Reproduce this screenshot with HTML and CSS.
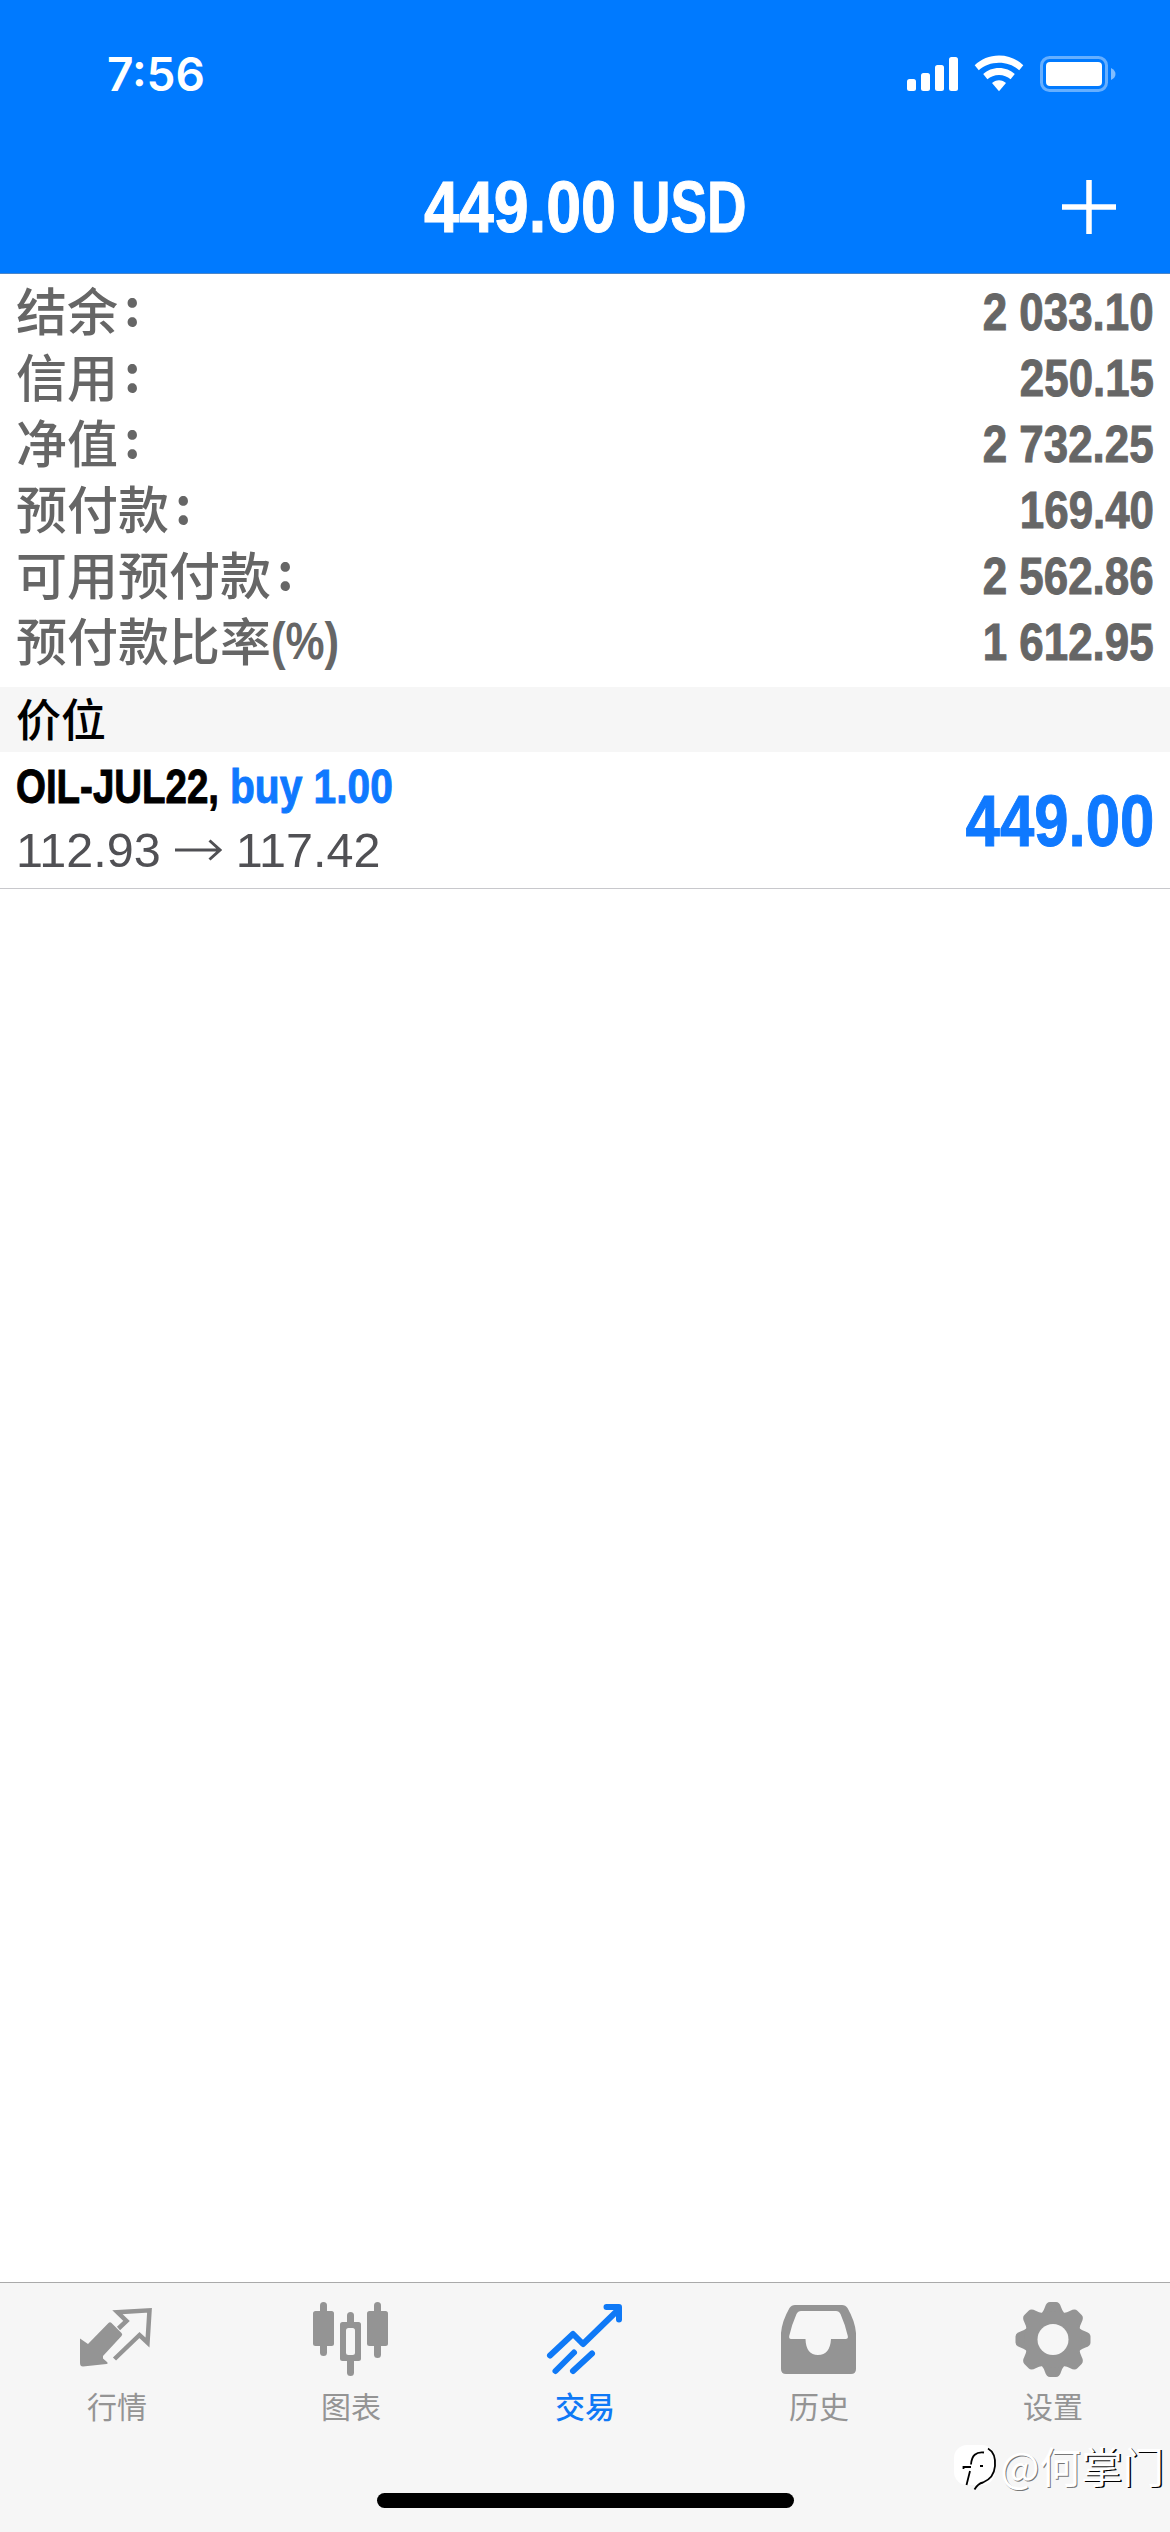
FILE: index.html
```html
<!DOCTYPE html>
<html lang="zh-CN">
<head>
<meta charset="utf-8">
<title>交易</title>
<link rel="stylesheet" href="styles.css">
</head>
<body>
<div class="app">
  <header class="header">
    <div class="status">
      <span class="time">7:56</span>
      <svg class="status-icons" width="210" height="38" viewBox="906 55 210 38">
        <g fill="#fff">
          <rect x="907" y="79" width="9" height="12" rx="2.5"/>
          <rect x="921" y="73" width="9" height="18" rx="2.5"/>
          <rect x="935" y="65" width="9" height="26" rx="2.5"/>
          <rect x="949" y="57" width="9" height="34" rx="2.5"/>
          <path d="M999 55.500C1008.500 55.500 1017 59.200 1023.300 65.200L1019.200 70.200C1013.800 65.500 1006.800 62.800 999 62.800S984.200 65.500 978.800 70.200L974.700 65.200C981 59.200 989.500 55.500 999 55.500Z"/>
          <path d="M999 68C1005.200 68 1010.700 70.300 1014.800 74.100L1010.600 79.300C1007.500 76.600 1003.500 75 999 75S990.500 76.600 987.400 79.300L983.200 74.100C987.300 70.300 992.800 68 999 68Z"/>
          <path d="M999 80.300C1001.800 80.300 1004.200 81.400 1006 83.100L999 91.300L992 83.100C993.800 81.400 996.200 80.300 999 80.300Z"/>
          <rect x="1046" y="62" width="56" height="24" rx="4"/>
        </g>
        <rect x="1041.500" y="57.500" width="65" height="33" rx="8" fill="none" stroke="#fff" stroke-opacity=".4" stroke-width="3"/>
        <path d="M1111 68C1114 69.500 1115.500 71.500 1115.500 74S1114 78.500 1111 80Z" fill="#fff" fill-opacity=".5"/>
      </svg>
    </div>
    <div class="nav">
      <h1 class="title"><span class="cond title-num">449.00</span><span class="cond title-cur">USD</span></h1>
      <svg class="plus" width="54" height="54" viewBox="0 0 54 54"><path d="M27 0V54M0 27H54" stroke="#fff" stroke-width="5.500"/></svg>
    </div>
  </header>

  <main class="content">
    <dl class="summary">
      <div class="row"><dt>结余<i class="colon">:</i></dt><dd class="cond">2 033.10</dd></div>
      <div class="row"><dt>信用<i class="colon">:</i></dt><dd class="cond">250.15</dd></div>
      <div class="row"><dt>净值<i class="colon">:</i></dt><dd class="cond">2 732.25</dd></div>
      <div class="row"><dt>预付款<i class="colon">:</i></dt><dd class="cond">169.40</dd></div>
      <div class="row"><dt>可用预付款<i class="colon">:</i></dt><dd class="cond">2 562.86</dd></div>
      <div class="row"><dt>预付款比率<span class="cond pct">(%)</span></dt><dd class="cond">1 612.95</dd></div>
    </dl>
    <h2 class="section">价位</h2>
    <div class="position">
      <div class="details">
        <div class="order"><span class="cond symbol">OIL-JUL22,</span><span class="cond side">buy 1.00</span></div>
        <div class="prices"><span>112.93</span>
          <svg width="47" height="22" viewBox="0 0 47 22"><path d="M0 11H45M34.500 1.500L45 11L34.500 20.500" fill="none" stroke="#505054" stroke-width="3"/></svg>
          <span>117.42</span></div>
      </div>
      <div class="cond profit">449.00</div>
    </div>
  </main>

  <nav class="tabs">
    <a class="tab">
      <svg width="78" height="78" viewBox="0 0 78 78"><path d="M2 34.500L10 40L30.500 19Q32 17.500 33.500 19L43.500 29Q45 30.500 43.500 32L25 52V54.500L29 58Q30.500 59.500 28.500 60L5 62.500Q2 62.500 2 59Z" fill="#949494"/><path d="M40.500 20.500L48.500 13L39.500 4.300L71.500 2.300L69.500 34.500L61.500 27L36.500 51" transform="translate(0 4)" fill="none" stroke="#949494" stroke-width="4.500"/></svg>
      <span>行情</span>
    </a>
    <a class="tab">
      <svg width="78" height="78" viewBox="0 0 78 78" fill="#949494"><rect x="8" y="-2" width="7" height="54" rx="3.500"/><rect x="1" y="7" width="21" height="35" rx="2.500"/><rect x="62" y="-2" width="7" height="56" rx="3.500"/><rect x="55" y="7" width="21" height="35" rx="2.500"/><rect x="35" y="8" width="7" height="64" rx="3.500"/><rect x="28" y="18" width="21" height="39" rx="2.500"/><rect x="34" y="24" width="9" height="27" rx="2.500" fill="#f6f6f6"/></svg>
      <span>图表</span>
    </a>
    <a class="tab active">
      <svg width="78" height="78" viewBox="0 0 78 78" fill="none" stroke="#0f79f6" stroke-width="6" stroke-linecap="round" stroke-linejoin="round"><path d="M4 51.500L27 30L37 40L72 6M60.500 3H73V15.500"/><path d="M9.500 67L28 48.500M27 67L46 49.500"/></svg>
      <span>交易</span>
    </a>
    <a class="tab">
      <svg width="78" height="78" viewBox="0 0 78 78"><path fill="#949494" fill-rule="evenodd" d="M15 1H62Q65.500 1 67.500 4Q75 17 76 29V65Q76 70 71 70H6Q1 70 1 65V29Q2 17 9.500 4Q11.500 1 15 1ZM21 7Q18 7 16.500 10Q12 20 9.200 32Q8.800 35 11 35H25.500Q26 51 38 51Q50 51 51 35H65.500Q68.500 35 67.800 32Q65 20 60.500 10Q59 7 56 7Z"/></svg>
      <span>历史</span>
    </a>
    <a class="tab">
      <svg width="78" height="78" viewBox="-39 -35.5 78 78"><defs><path id="tooth" d="M-11.500 -26Q-9 -29 -8 -32.500Q-6.500 -37.500 -3 -37.500H3Q6.500 -37.500 8 -32.500Q9 -29 11.500 -26L8 -15H-8Z"/></defs><g fill="#949494"><use href="#tooth"/><use href="#tooth" transform="rotate(45)"/><use href="#tooth" transform="rotate(90)"/><use href="#tooth" transform="rotate(135)"/><use href="#tooth" transform="rotate(180)"/><use href="#tooth" transform="rotate(225)"/><use href="#tooth" transform="rotate(270)"/><use href="#tooth" transform="rotate(315)"/><circle r="28.500"/></g><circle r="15.500" fill="#f6f6f6"/></svg>
      <span>设置</span>
    </a>
    <div class="home-indicator"></div>
    <div class="watermark">
      <svg width="44" height="48" viewBox="0 0 44 48"><rect x="0" y="1" width="41" height="40" rx="13" fill="#fff"/><path d="M34 4.500Q42 9 41 22Q40 34 29 38.500Q24 39.500 20.500 45.500" fill="none" stroke="#000" stroke-width="1.800"/><path d="M30 8.500Q18 7 17 20.500M9.500 25V23H17M26 22H29M16 27L12.500 41" fill="none" stroke="#000" stroke-width="1.800"/></svg>
      <span class="handle"><span class="faint">@何</span>掌门</span>
    </div>
  </nav>
</div>
</body>
</html>
```
FILE: styles.css
```css
* { box-sizing: border-box; margin: 0; padding: 0; }

body {
  width: 1170px;
  height: 2532px;
  overflow: hidden;
  background: #fff;
  font-family: "Liberation Sans", "Noto Sans CJK SC", sans-serif;
}

.app { display: flex; flex-direction: column; height: 2532px; }

.header {
  flex: none;
  height: 274px;
  background: #007aff;
  border-bottom: 1px solid #4c86c8;
  color: #fff;
}
.status {
  display: flex;
  justify-content: space-between;
  align-items: center;
  height: 148px;
  padding: 0 54px 0 107px;
}
.time { font: 600 46px/60px Inter, sans-serif; }
.nav {
  display: grid;
  grid-template-columns: 1fr auto 1fr;
  align-items: center;
  height: 117px;
  padding: 0 54px;
}
.title { grid-column: 2; display: flex; height: 84px; }
.plus { justify-self: end; }

/* Condensed bold face */
.cond {
  display: block;
  font-weight: 700;
  white-space: pre;
  transform: scaleX(.86);
  transform-origin: 0 50%;
  -webkit-text-stroke: 1px currentColor;
}
.title-num, .title-cur { font-size: 73px; line-height: 84px; }
.title-num { width: 207px; }
.title-cur { width: 116px; transform: scaleX(.75); }

.content { flex: 1; }
.summary { padding: 5px 16px 12px; color: #666; }
.row {
  display: flex;
  justify-content: space-between;
  height: 66px;
  font-size: 51px;
  line-height: 66px;
}
.row dt {
  display: flex;
  height: 60px;
  font-family: "Noto Sans CJK SC", sans-serif;
  font-weight: 500;
  line-height: 60px;
}
.row dd { line-height: 67px; transform-origin: 100% 50%; }
.colon {
  margin-left: 6px;
  font-style: normal;
  font-weight: 700;
  line-height: 50px;
}
.pct { font-family: "Liberation Sans", sans-serif; line-height: 66px; -webkit-text-stroke: 0; }

.section {
  height: 65px;
  padding-left: 16px;
  background: #f6f6f6;
  font: 500 45px/62px "Noto Sans CJK SC", sans-serif;
}
.position {
  display: flex;
  justify-content: space-between;
  height: 137px;
  padding: 0 16px;
  border-bottom: 1px solid #c8c8cc;
}
.order {
  display: flex;
  height: 70px;
  font-size: 49px;
  line-height: 69px;
}
.symbol { width: 214px; transform: scaleX(.785); }
.side { color: #0f79ff; transform: scaleX(.83); }
.prices {
  display: flex;
  align-items: center;
  gap: 14px;
  height: 56px;
  color: #505054;
  font-size: 48.500px;
  line-height: 56px;
}
.profit {
  color: #0f79ff;
  font-size: 73px;
  line-height: 138px;
  transform: scaleX(.845);
  transform-origin: 100% 50%;
}

.tabs {
  position: relative;
  flex: none;
  display: grid;
  grid-template-columns: repeat(5, 1fr);
  height: 250px;
  background: #f6f6f6;
  border-top: 1px solid #aaa;
}
.tab {
  display: flex;
  flex-direction: column;
  align-items: center;
  gap: 1px;
  padding-top: 21px;
  color: #949494;
  font: 400 30px/44px "Noto Sans CJK SC", sans-serif;
}
.tab svg { overflow: visible; }
.tab.active { color: #0f79f6; font-weight: 500; }

.home-indicator {
  position: absolute;
  left: 377px;
  bottom: 24px;
  width: 417px;
  height: 15px;
  border-radius: 8px;
  background: #000;
}
.watermark {
  position: absolute;
  right: 6px;
  bottom: 40px;
  display: flex;
  align-items: flex-end;
  gap: 2px;
  color: #fff;
  font: 400 41.500px/54px "Noto Sans CJK SC", sans-serif;
  text-shadow: 1.500px 1px 0 #000;
}
.faint { text-shadow: 1px 1px 0 #777; }
```
